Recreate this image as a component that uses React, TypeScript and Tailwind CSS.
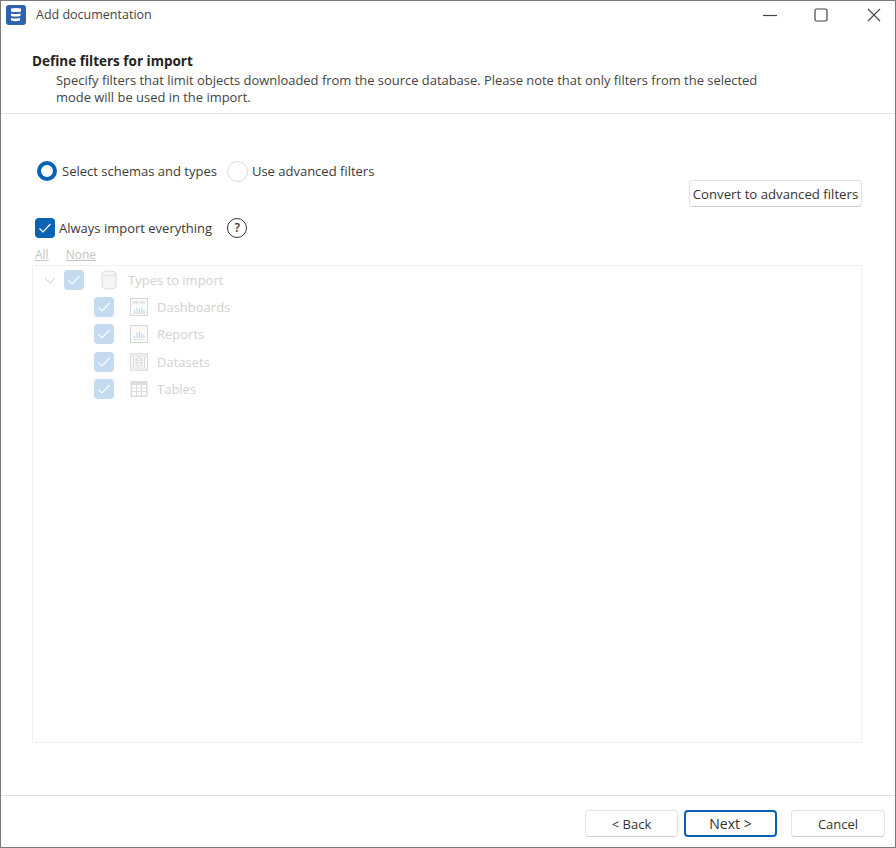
import React from "react";

function TreeCheck() {
  return (
    <span className="flex h-[20px] w-[20px] items-center justify-center rounded-[4px] bg-[#c3daf0]">
      <svg width="14" height="14" viewBox="0 0 14 14" fill="none" stroke="#ffffff" strokeWidth="1.1">
        <path d="M1.5 7.5 L5 11 L12.5 3" />
      </svg>
    </span>
  );
}

function ChartIcon({ header }: { header?: boolean }) {
  return (
    <svg width="18" height="18" viewBox="0 0 18 18" fill="none">
      <rect x="0.5" y="0.5" width="17" height="17" fill="#fbfbfb" stroke="#d6d6d6" />
      {header && <rect x="2.5" y="3" width="6" height="2.5" fill="#e2e2e2" />}
      {header && <rect x="10" y="3" width="5.5" height="2.5" fill="#e2e2e2" />}
      <path
        d={header ? "M4.5 15V12M7 15V10M9.5 15V11M12 15V9.5M14 15V12" : "M4.5 13V10.5M7 13V7.5M9.5 13V6M12 13V8M14 13V10"}
        stroke="#b9d3ec"
        strokeWidth="1"
      />
      <path d={header ? "M3 15.5H15" : "M3 14.5H15"} stroke="#dcdcdc" strokeWidth="0.8" />
    </svg>
  );
}

function DatasetIcon() {
  return (
    <svg width="18" height="18" viewBox="0 0 18 18" fill="none" stroke="#d8d8d8">
      <rect x="0.5" y="0.5" width="17" height="17" fill="#fbfbfb" />
      <rect x="0.5" y="0.5" width="17" height="3.5" fill="#ededed" stroke="none" />
      <rect x="0.5" y="14" width="17" height="3.5" fill="#ededed" stroke="none" />
      <path d="M3.5 4V14M14.5 4V14" />
      <ellipse cx="9" cy="6" rx="3" ry="1.3" />
      <path d="M6 6V12C6 13.3 12 13.3 12 12V6M6 9C6 10.2 12 10.2 12 9" />
    </svg>
  );
}

function TableIcon() {
  return (
    <svg width="18" height="18" viewBox="0 0 18 18">
      <rect x="0.5" y="1" width="17" height="16" fill="#dcdcdc" />
      <path
        d="M2 5H6V7.5H2ZM7 5H11V7.5H7ZM12 5H16V7.5H12ZM2 8.5H6V11H2ZM7 8.5H11V11H7ZM12 8.5H16V11H12ZM2 12H6V15.5H2ZM7 12H11V15.5H7ZM12 12H16V15.5H12Z"
        fill="#ffffff"
      />
    </svg>
  );
}

function TreeRow({ icon, label }: { icon: React.ReactNode; label: string }) {
  return (
    <div className="flex h-[27.4px] items-center pl-[61px]">
      <TreeCheck />
      <span className="ml-[16px] flex w-[18px] justify-center">{icon}</span>
      <span className="ml-[9px] text-[#d2d2d2]">{label}</span>
    </div>
  );
}

function FooterButton({ children, primary, className }: { children: React.ReactNode; primary?: boolean; className: string }) {
  return (
    <button
      type="button"
      className={`h-[27px] rounded-[4px] bg-white text-[#333] ${
        primary ? "border-2 border-[#0a62b4]" : "border border-[#e3e3e3] border-b-[#cfcfcf]"
      } ${className}`}
    >
      {children}
    </button>
  );
}

export default function App() {
  return (
    <div
      className="flex h-[848px] w-[896px] flex-col overflow-hidden border border-[#7a7a7a] bg-white text-[13px] leading-[18px] text-[#3a3a3a]"
      style={{ fontFamily: '"Open Sans", "Liberation Sans", sans-serif' }}
    >
      {/* Title bar */}
      <div className="flex h-[27px] shrink-0 items-center">
        <svg className="ml-[5px]" width="20" height="20" viewBox="0 0 20 20">
          <rect x="0" y="0" width="20" height="20" rx="3" fill="#2f62ae" />
          <path d="M5 3.5C8 2.8 12 2.8 15 3.5V6.5C12 7.2 8 7.2 5 6.5ZM5 8.5C8 9.2 11 9.2 14.5 8.5V11C11 11.7 8 11.7 5 11ZM5 13C8 13.7 11 13.7 14 13V15.5C11 16.4 8 16.4 5 15.5Z" fill="#ffffff" />
        </svg>
        <span className="ml-[10px] text-[12.5px] text-[#444]">Add documentation</span>
        <div className="ml-auto flex items-center">
          <svg width="14" height="14" viewBox="0 0 14 14" stroke="#444" strokeWidth="1.2">
            <path d="M0 7.5H14" />
          </svg>
          <svg className="ml-[37px]" width="14" height="14" viewBox="0 0 14 14" fill="none" stroke="#444" strokeWidth="1.2">
            <rect x="1" y="1" width="12" height="12" rx="1.5" />
          </svg>
          <svg className="ml-[39px] mr-[14px]" width="14" height="14" viewBox="0 0 14 14" stroke="#444" strokeWidth="1.1">
            <path d="M1 1L13 13M13 1L1 13" />
          </svg>
        </div>
      </div>

      {/* Wizard heading */}
      <div className="h-[86px] shrink-0 border-b border-[#e2e2e2] pl-[31px] pt-[24px]">
        <h1 className="text-[13.5px] font-bold leading-[19px] text-[#222]">Define filters for import</h1>
        <p className="ml-[24px] mt-[1px] w-[710px] text-[12.95px] leading-[17px] text-[#444]">
          Specify filters that limit objects downloaded from the source database. Please note that only filters from the selected mode will be used in the import.
        </p>
      </div>

      {/* Filter mode */}
      <div className="flex min-h-0 flex-1 flex-col pl-[31px] pr-[33px]">
        <div className="mt-[46px] flex h-[22px] items-center pl-[5px]">
          <span className="h-[20px] w-[20px] rounded-full border-[4px] border-[#0a62b4] bg-white" />
          <span className="ml-[5px]">Select schemas and types</span>
          <span className="ml-[10px] h-[21px] w-[21px] rounded-full border border-[#d8d8d8] bg-white" />
          <span className="ml-[4px]">Use advanced filters</span>
        </div>
        <div className="-mt-[2px] flex justify-end">
          <button type="button" className="h-[27px] w-[173px] rounded-[4px] border border-[#e3e3e3] border-b-[#cfcfcf] bg-white text-[13.2px] text-[#333]">
            Convert to advanced filters
          </button>
        </div>
        <div className="mt-[10px] flex h-[22px] items-center pl-[3px]">
          <span className="flex h-[20px] w-[20px] items-center justify-center rounded-[4px] bg-[#0a62b4]">
            <svg width="14" height="14" viewBox="0 0 14 14" fill="none" stroke="#ffffff" strokeWidth="1.2">
              <path d="M1.5 7.5 L5 11 L12.5 3" />
            </svg>
          </span>
          <span className="ml-[4px]">Always import everything</span>
          <span className="ml-[15px] flex h-[20px] w-[20px] items-center justify-center rounded-full border border-[#333] text-[12px] font-semibold leading-none text-[#333]">
            ?
          </span>
        </div>
        <div className="mt-[8px] flex h-[16px] items-center pl-[3px] text-[12px] text-[#c4c4c4] underline">
          <span>All</span>
          <span className="ml-[17px]">None</span>
        </div>

        {/* Types tree */}
        <div className="mb-[52px] mt-[2px] flex-1 border border-[#f0f0f0]">
          <div className="flex h-[27.4px] items-center pl-[11px]">
            <svg width="12" height="12" viewBox="0 0 12 12" fill="none" stroke="#cfcfcf" strokeWidth="1">
              <path d="M1 4L6 9L11 4" />
            </svg>
            <span className="ml-[8px]">
              <TreeCheck />
            </span>
            <svg className="ml-[17px]" width="16" height="20" viewBox="0 0 16 20" fill="#f6f6f6" stroke="#dcdcdc">
              <path d="M1 4V16.5C1 18 4 19 8 19C12 19 15 18 15 16.5V4" />
              <ellipse cx="8" cy="3.5" rx="7" ry="2.5" />
            </svg>
            <span className="ml-[11px] text-[#d2d2d2]">Types to import</span>
          </div>
          <TreeRow icon={<ChartIcon header />} label="Dashboards" />
          <TreeRow icon={<ChartIcon />} label="Reports" />
          <TreeRow icon={<DatasetIcon />} label="Datasets" />
          <TreeRow icon={<TableIcon />} label="Tables" />
        </div>
      </div>

      {/* Wizard buttons */}
      <div className="flex h-[52px] shrink-0 items-start border-t border-[#e2e2e2] pl-[584px] pt-[14px]">
        <FooterButton className="w-[93px]">&lt; Back</FooterButton>
        <FooterButton primary className="ml-[6px] w-[93px] text-[14px]">Next &gt;</FooterButton>
        <FooterButton className="ml-[14px] w-[94px]">Cancel</FooterButton>
      </div>
    </div>
  );
}
